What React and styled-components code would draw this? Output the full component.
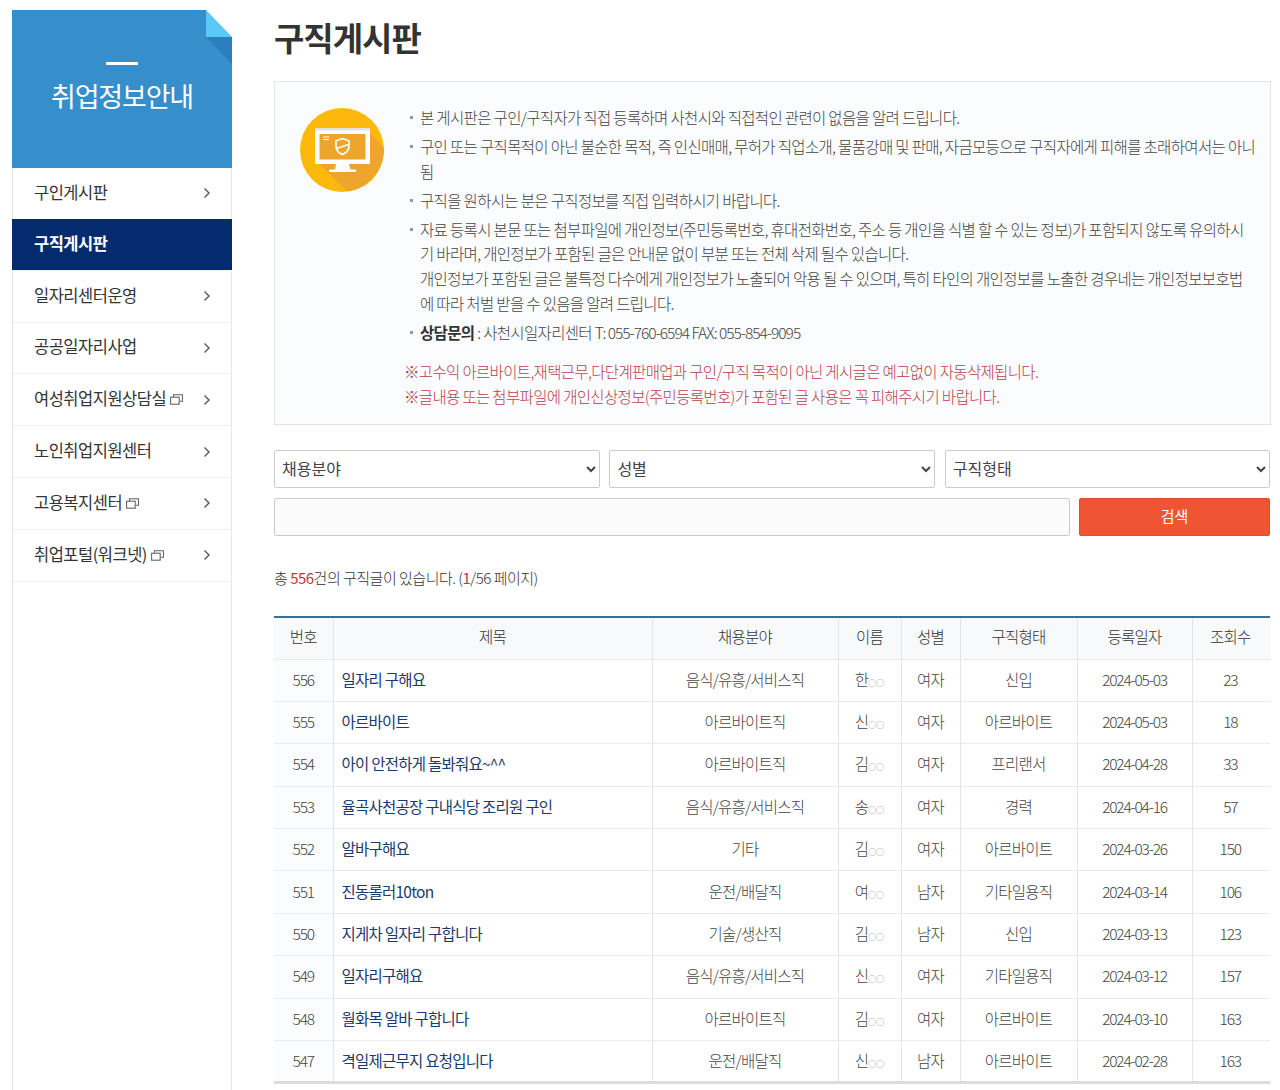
import React from "react";
import styled, { createGlobalStyle } from "styled-components";

const FONT = '"Noto Sans CJK KR", "Noto Sans", sans-serif';

const GlobalStyle = createGlobalStyle`
  html, body {
    margin: 0;
    padding: 0;
    background: #fff;
    font-family: ${FONT};
    color: #444;
  }
  * {
    box-sizing: border-box;
  }
`;

const menus = [
  { label: "구인게시판" },
  { label: "구직게시판", active: true },
  { label: "일자리센터운영" },
  { label: "공공일자리사업" },
  { label: "여성취업지원상담실", external: true },
  { label: "노인취업지원센터" },
  { label: "고용복지센터", external: true },
  { label: "취업포털(워크넷)", external: true },
];

const rows = [
  [556, "일자리 구해요", "음식/유흥/서비스직", "한", "여자", "신입", "2024-05-03", 23],
  [555, "아르바이트", "아르바이트직", "신", "여자", "아르바이트", "2024-05-03", 18],
  [554, "아이 안전하게 돌봐줘요~^^", "아르바이트직", "김", "여자", "프리랜서", "2024-04-28", 33],
  [553, "율곡사천공장 구내식당 조리원 구인", "음식/유흥/서비스직", "송", "여자", "경력", "2024-04-16", 57],
  [552, "알바구해요", "기타", "김", "여자", "아르바이트", "2024-03-26", 150],
  [551, "진동롤러10ton", "운전/배달직", "여", "남자", "기타일용직", "2024-03-14", 106],
  [550, "지게차 일자리 구합니다", "기술/생산직", "김", "남자", "신입", "2024-03-13", 123],
  [549, "일자리구해요", "음식/유흥/서비스직", "신", "여자", "기타일용직", "2024-03-12", 157],
  [548, "월화목 알바 구합니다", "아르바이트직", "김", "여자", "아르바이트", "2024-03-10", 163],
  [547, "격일제근무지 요청입니다", "운전/배달직", "신", "남자", "아르바이트", "2024-02-28", 163],
];

const columns = [
  { label: "번호", width: 59 },
  { label: "제목", width: 319 },
  { label: "채용분야", width: 186 },
  { label: "이름", width: 63 },
  { label: "성별", width: 59 },
  { label: "구직형태", width: 117 },
  { label: "등록일자", width: 115 },
  { label: "조회수", width: 78 },
];

const Chevron = () => (
  <ChevronIcon viewBox="0 0 8 12" aria-hidden="true">
    <path d="M1.5 1.5 6 6l-4.5 4.5" fill="none" stroke="#555" strokeWidth="1.4" />
  </ChevronIcon>
);

const NewWindow = () => (
  <WindowIcon viewBox="0 0 13 11" aria-hidden="true">
    <path d="M3.5 3V.8h9v6.4h-2.6" fill="none" stroke="#666" strokeWidth="1.1" />
    <rect x=".6" y="3.2" width="8.6" height="7" fill="none" stroke="#666" strokeWidth="1.1" />
  </WindowIcon>
);

const MonitorBadge = () => (
  <BadgeIcon viewBox="0 0 84 84" aria-hidden="true">
    <defs>
      <clipPath id="badge-clip">
        <circle cx="42" cy="42" r="42" />
      </clipPath>
    </defs>
    <circle cx="42" cy="42" r="42" fill="#fdb90b" />
    <path d="M67 21 84 40v44H48L18 55Z" fill="#eda52c" clipPath="url(#badge-clip)" />
    <rect x="15" y="20" width="55" height="36" fill="#fff" />
    <rect x="15" y="20" width="55" height="2.5" fill="#dfe3e6" />
    <rect x="19.5" y="26" width="46" height="25.5" fill="#eda52c" />
    <rect x="23" y="28.5" width="6" height="1" fill="#fff" />
    <rect x="23" y="31" width="6" height="1" fill="#fff" />
    <path d="M36 56h13l1.5 6H35Z" fill="#fff" />
    <rect x="29" y="61.5" width="27" height="2.5" rx="1" fill="#fff" />
    <path
      d="M42.500 30.500l6.500 2.300v5.200c0 4.300-2.800 7-6.500 8.500-3.700-1.500-6.500-4.200-6.500-8.500v-5.200Z"
      fill="none"
      stroke="#fff"
      strokeWidth="1.6"
    />
    <path d="M36.500 40.500l12-4" stroke="#fff" strokeWidth="1.4" />
  </BadgeIcon>
);

const App = () => {
  return (
    <>
      <GlobalStyle />
      <Page>
        <Sidebar>
          <SideHead>
            <Fold viewBox="0 0 26 54" aria-hidden="true">
              <path d="M0 0 26 27H0Z" fill="#5bc9f6" />
              <path d="M0 0H26V27Z" fill="#fff" />
              <path d="M0 27H26V54Z" fill="#2a7ebf" />
            </Fold>
            <Dash />
            <SideTitle>취업정보안내</SideTitle>
          </SideHead>
          <Menu>
            {menus.map((m) => (
              <MenuItem key={m.label} $active={m.active}>
                <MenuLabel>
                  {m.label}
                  {m.external && <NewWindow />}
                </MenuLabel>
                {!m.active && <Chevron />}
              </MenuItem>
            ))}
          </Menu>
        </Sidebar>

        <Main>
          <PageTitle>구직게시판</PageTitle>

          <Notice>
            <MonitorBadge />
            <NoticeBody>
              <NoticeList>
                <li>본 게시판은 구인/구직자가 직접 등록하며 사천시와 직접적인 관련이 없음을 알려 드립니다.</li>
                <li>
                  구인 또는 구직목적이 아닌 불순한 목적, 즉 인신매매, 무허가 직업소개, 물품강매 및 판매, 자금모등으로 구직자에게 피해를 초래하여서는 아니
                  <br />됨
                </li>
                <li>구직을 원하시는 분은 구직정보를 직접 입력하시기 바랍니다.</li>
                <li>
                  자료 등록시 본문 또는 첨부파일에 개인정보(주민등록번호, 휴대전화번호, 주소 등 개인을 식별 할 수 있는 정보)가 포함되지 않도록 유의하시
                  <br />
                  기 바라며, 개인정보가 포함된 글은 안내문 없이 부분 또는 전체 삭제 될수 있습니다.
                  <br />
                  개인정보가 포함된 글은 불특정 다수에게 개인정보가 노출되어 악용 될 수 있으며, 특히 타인의 개인정보를 노출한 경우네는 개인정보보호법
                  <br />
                  에 따라 처벌 받을 수 있음을 알려 드립니다.
                </li>
                <li>
                  <strong>상담문의</strong> : 사천시일자리센터 <Tight>T: 055-760-6594 FAX: 055-854-9095</Tight>
                </li>
              </NoticeList>
              <Warnings>
                <p>※고수익 아르바이트,재택근무,다단계판매업과 구인/구직 목적이 아닌 게시글은 예고없이 자동삭제됩니다.</p>
                <p>※글내용 또는 첨부파일에 개인신상정보(주민등록번호)가 포함된 글 사용은 꼭 피해주시기 바랍니다.</p>
              </Warnings>
            </NoticeBody>
          </Notice>

          <SearchForm onSubmit={(e) => e.preventDefault()}>
            <FilterRow>
              <Select defaultValue="">
                <option value="">채용분야</option>
              </Select>
              <Select defaultValue="">
                <option value="">성별</option>
              </Select>
              <Select defaultValue="">
                <option value="">구직형태</option>
              </Select>
            </FilterRow>
            <KeywordRow>
              <Keyword type="text" />
              <SearchButton type="submit">검색</SearchButton>
            </KeywordRow>
          </SearchForm>

          <Count>
            총 <em>556</em>건의 구직글이 있습니다. (<em>1</em>/56 페이지)
          </Count>

          <Board>
            <colgroup>
              {columns.map((c) => (
                <col key={c.label} style={{ width: c.width }} />
              ))}
            </colgroup>
            <thead>
              <tr>
                {columns.map((c) => (
                  <th key={c.label}>{c.label}</th>
                ))}
              </tr>
            </thead>
            <tbody>
              {rows.map((r) => (
                <tr key={r[0]}>
                  <NumCell>{r[0]}</NumCell>
                  <SubjectCell>{r[1]}</SubjectCell>
                  <td>{r[2]}</td>
                  <td>
                    {r[3]}
                    <Masked>○○</Masked>
                  </td>
                  <td>{r[4]}</td>
                  <td>{r[5]}</td>
                  <DigitCell>{r[6]}</DigitCell>
                  <DigitCell>{r[7]}</DigitCell>
                </tr>
              ))}
            </tbody>
          </Board>
        </Main>
      </Page>
    </>
  );
};

const Page = styled.div`
  display: flex;
  align-items: stretch;
  width: 1280px;
  height: 1090px;
  padding-left: 12px;
  overflow: hidden;
`;

const Sidebar = styled.aside`
  flex: 0 0 220px;
  margin-top: 10px;
  border-left: 1px solid #e6e6e6;
  border-right: 1px solid #e6e6e6;
`;

const SideHead = styled.div`
  position: relative;
  height: 158px;
  margin: 0 -1px;
  padding-top: 52px;
  background: #368fcb;
  display: flex;
  flex-direction: column;
  align-items: center;
`;

const Fold = styled.svg`
  position: absolute;
  top: 0;
  right: 0;
  width: 26px;
  height: 54px;
`;

const Dash = styled.span`
  width: 32px;
  height: 3px;
  background: #fff;
`;

const SideTitle = styled.h2`
  margin: 13px 0 0;
  font-size: 27px;
  font-weight: 400;
  line-height: 36px;
  letter-spacing: -1.2px;
  color: #fff;
`;

const Menu = styled.ul`
  list-style: none;
  margin: 0;
  padding: 0;
`;

const MenuItem = styled.li`
  display: flex;
  align-items: center;
  justify-content: space-between;
  height: ${(p) => (p.$active ? "52px" : "51.8px")};
  margin: ${(p) => (p.$active ? "-1px -1px 0" : "0")};
  padding: 0 20px 0 ${(p) => (p.$active ? "22px" : "21px")};
  font-size: 16.5px;
  font-weight: ${(p) => (p.$active ? 700 : 400)};
  letter-spacing: -0.5px;
  color: ${(p) => (p.$active ? "#fff" : "#333")};
  background: ${(p) => (p.$active ? "#032b6e" : "transparent")};
  border-bottom: 1px solid #f0f0f0;
`;

const MenuLabel = styled.span`
  display: inline-flex;
  align-items: center;
  gap: 4px;
  margin-top: -3px;
`;

const ChevronIcon = styled.svg`
  width: 8px;
  height: 12px;
`;

const WindowIcon = styled.svg`
  width: 13px;
  height: 11px;
  margin-top: 3px;
`;

const Main = styled.main`
  flex: 0 0 997px;
  margin-left: 42px;
`;

const PageTitle = styled.h1`
  margin: 0;
  height: 81px;
  padding-top: 9px;
  font-size: 33px;
  font-weight: 700;
  line-height: 56px;
  letter-spacing: -1px;
  color: #333;
`;

const Notice = styled.section`
  display: flex;
  align-items: flex-start;
  height: 344px;
  padding: 26px 0 0 25px;
  background: #fbfcfe;
  border: 1px solid #e3e3e3;
`;

const BadgeIcon = styled.svg`
  flex: none;
  width: 84px;
  height: 84px;
`;

const NoticeBody = styled.div`
  margin-left: 20px;
  margin-top: -3px;
`;

const NoticeList = styled.ul`
  list-style: none;
  margin: 0;
  padding: 0 0 0 16px;
  font-size: 15.5px;
  font-weight: 300;
  line-height: 24.6px;
  letter-spacing: -0.66px;
  color: #444;
  white-space: nowrap;

  li {
    position: relative;
    margin-bottom: 4.5px;
  }
  li::before {
    content: "";
    position: absolute;
    left: -10px;
    top: 11px;
    width: 3px;
    height: 3px;
    background: #8c9bab;
  }
  strong {
    font-weight: 700;
    color: #333;
  }
`;

const Tight = styled.span`
  letter-spacing: -1px;
`;

const Warnings = styled.div`
  margin-top: 15px;
  font-size: 15.5px;
  font-weight: 300;
  line-height: 24.6px;
  letter-spacing: -0.66px;
  color: #b8404c;
  white-space: nowrap;

  p {
    margin: 0;
  }
`;

const SearchForm = styled.form`
  display: flex;
  flex-direction: column;
  gap: 10px;
  margin-top: 25px;
  width: 996px;
`;

const FilterRow = styled.div`
  display: grid;
  grid-template-columns: 326px 326px 1fr;
  column-gap: 9.4px;
`;

const KeywordRow = styled.div`
  display: flex;
  gap: 9px;
`;

const Select = styled.select`
  height: 38px;
  padding: 0 3px 2px;
  font-family: ${FONT};
  font-size: 16px;
  color: #444;
  background: #fff;
  border: 1px solid #ccc;
  border-radius: 2px;
`;

const Keyword = styled.input`
  flex: 1;
  height: 38px;
  background: #fbfbfb;
  border: 1px solid #ccc;
  border-radius: 2px;
`;

const SearchButton = styled.button`
  flex: 0 0 191px;
  height: 38px;
  padding: 0 0 4px;
  font-family: ${FONT};
  font-size: 15px;
  color: #fff;
  background: #f05533;
  border: 1px solid #e04c2c;
  border-radius: 2px;
`;

const Count = styled.p`
  margin: 30px 0 0;
  height: 50px;
  font-size: 15px;
  font-weight: 300;
  line-height: 24px;
  letter-spacing: -0.5px;
  color: #333;

  em {
    font-style: normal;
    font-weight: 400;
    color: #d02f3c;
  }
`;

const Board = styled.table`
  width: 996px;
  table-layout: fixed;
  border-collapse: collapse;
  border-top: 2px solid #3a7094;
  border-bottom: 3px solid #dcdcdc;
  font-size: 15.5px;
  font-weight: 300;
  letter-spacing: -0.76px;
  color: #444;

  th {
    height: 42px;
    font-weight: 300;
    color: #333;
    background: #f7f9fb;
    border-bottom: 1px solid #e8ebee;
    border-left: 1px solid #e1e5e8;
    text-align: center;
    padding: 0 0 4px;
  }
  td {
    height: 42.4px;
    padding: 0 0 3px;
    text-align: center;
    border-bottom: 1px solid #e9ebee;
    border-left: 1px solid #e1e5e8;
  }
  th:first-child,
  td:first-child {
    border-left: 0;
  }
  th:last-child,
  td:last-child {
    padding-right: 2px;
  }
`;

const DigitCell = styled.td`
  letter-spacing: -1.2px;
`;

const NumCell = styled(DigitCell)`
  background: #fbfcfe;
`;

const SubjectCell = styled.td`
  && {
    padding-left: 8px;
    text-align: left;
    font-weight: 400;
    color: #1b3a6e;
  }
`;

const Masked = styled.span`
  font-size: 8px;
  color: #777;
  letter-spacing: 0;
`;

export default App;
